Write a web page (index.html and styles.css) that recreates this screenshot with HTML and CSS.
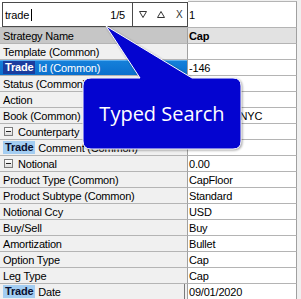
FILE: index.html
```html
<!DOCTYPE html>
<html>
<head>
<meta charset="utf-8">
<link rel="stylesheet" href="styles.css">
</head>
<body>
<div class="grid">
  <div class="row search-row">
    <div class="search-cell">
      <div class="searchbox">
        <div class="sinput"><span class="stext">trade</span><span class="caret"></span><span class="count">1/5</span></div>
        <div class="sbtns">
          <svg class="tri" width="8" height="7" viewBox="0 0 8 7"><path d="M0.5 0.5 H7.5 L4 6.5 Z" fill="none" stroke="#333" stroke-width="1"/></svg>
          <svg class="tri" width="8" height="7" viewBox="0 0 8 7"><path d="M0.5 6.5 H7.5 L4 0.5 Z" fill="none" stroke="#333" stroke-width="1"/></svg>
          <span class="xbtn">X</span>
        </div>
      </div>
    </div>
    <div class="rcell search-val">1</div>
  </div>
  <div class="row strat-row"><div class="lcell">Strategy Name</div><div class="rcell bold">Cap</div></div>
  <div class="row"><div class="lcell">Template (Common)</div><div class="rcell"></div></div>
  <div class="row sel-row"><div class="lcell"><span class="hl-dark">Trade</span>&nbsp;Id (Common)</div><div class="rcell">-146</div></div>
  <div class="row"><div class="lcell">Status (Common)</div><div class="rcell"></div></div>
  <div class="row"><div class="lcell">Action</div><div class="rcell"></div></div>
  <div class="row"><div class="lcell">Book (Common)</div><div class="rcell">FX_NEW_NYC</div></div>
  <div class="row"><div class="lcell"><span class="toggle"></span>Counterparty</div><div class="rcell"></div></div>
  <div class="row"><div class="lcell"><span class="hl-light">Trade</span>&nbsp;Comment (Common)</div><div class="rcell"></div></div>
  <div class="row"><div class="lcell"><span class="toggle"></span>Notional</div><div class="rcell">0.00</div></div>
  <div class="row"><div class="lcell">Product Type (Common)</div><div class="rcell">CapFloor</div></div>
  <div class="row"><div class="lcell">Product Subtype (Common)</div><div class="rcell">Standard</div></div>
  <div class="row"><div class="lcell">Notional Ccy</div><div class="rcell">USD</div></div>
  <div class="row"><div class="lcell">Buy/Sell</div><div class="rcell">Buy</div></div>
  <div class="row"><div class="lcell">Amortization</div><div class="rcell">Bullet</div></div>
  <div class="row"><div class="lcell">Option Type</div><div class="rcell">Cap</div></div>
  <div class="row"><div class="lcell">Leg Type</div><div class="rcell">Cap</div></div>
  <div class="row cur-row"><div class="lcell"><span class="hl-light">Trade</span>&nbsp;Date</div><div class="rcell">09/01/2020</div></div>
</div>

<div class="callout">
  <svg class="bubble" width="160" height="126" viewBox="0 0 160 126">
    <path d="M24 1 L110 53 L151 53 Q159 53 159 61 L159 116 Q159 124 151 124 L9 124 Q1 124 1 116 L1 61 Q1 53 9 53 L58 53 Z" fill="#0404d0" stroke="#ffffff" stroke-width="1"/>
  </svg>
  <div class="label">Typed Search</div>
</div>
</body>
</html>
```

FILE: styles.css
```css
* { box-sizing: border-box; }

body {
  margin: 0;
  width: 301px;
  height: 299px;
  overflow: hidden;
  position: relative;
  background: #f0f0f0;
  color: #000;
  font-family: "Liberation Sans", Arial, sans-serif;
  font-size: 11px;
  letter-spacing: -0.2px;
}

.grid {
  display: flex;
  flex-direction: column;
}

.row {
  display: flex;
  height: 16px;
}

.lcell {
  width: 188px;
  padding-left: 3px;
  background: #f0f0f0;
  border-right: 1px solid #a0a0a0;
  border-bottom: 1px solid #b4b4b4;
  display: flex;
  align-items: center;
  white-space: nowrap;
  overflow: hidden;
}

.rcell {
  width: 109px;
  padding-left: 1px;
  background: #fff;
  border-right: 1px solid #a0a0a0;
  border-bottom: 1px solid #b4b4b4;
  display: flex;
  align-items: center;
  white-space: nowrap;
  overflow: hidden;
}

.bold { font-weight: bold; }

/* search row */
.search-row { height: 28px; }

.search-cell {
  width: 188px;
  background: #fff;
  padding: 2px 0 0 2px;
  border-bottom: 1px solid #b4b4b4;
}

.searchbox {
  width: 186px;
  height: 25px;
  border: 1px solid #4a4a4a;
  background: #fff;
  display: flex;
}

.sinput {
  width: 130px;
  border-right: 1px solid #4a4a4a;
  display: flex;
  align-items: center;
  padding: 0 7px 0 2px;
}

.stext { font-size: 11px; }

.caret {
  width: 1px;
  height: 12px;
  background: #000;
  margin-left: 2px;
}

.count { margin-left: auto; }

.sbtns {
  flex: 1;
  display: flex;
  align-items: center;
  padding-left: 6px;
  gap: 10px;
}

.tri { display: block; }

.xbtn {
  font-size: 10px;
  color: #333;
  margin-left: 1px;
}

.search-val {
  margin-top: 1px;
  border-top: 1px solid #b4b4b4;
  height: 27px;
}

/* strategy row */
.strat-row .lcell { background: #c6c6c6; }
.strat-row .rcell { background: #e2e2e2; }

/* selected row */
.sel-row .lcell {
  background: linear-gradient(#5cb0f0 0, #5cb0f0 1px, #1580da 1px, #0a6fcd 100%);
  color: #fff;
}

.hl-dark {
  display: inline-block;
  height: 13px;
  line-height: 13px;
  padding: 0 2px;
  margin-left: 0;
  background: #1a3c9e;
  color: #fff;
  font-weight: bold;
}

.hl-light {
  display: inline-block;
  height: 13px;
  line-height: 13px;
  padding: 0 2px;
  background: #a3cdf2;
  color: #0a1030;
  font-weight: bold;
}

.sel-row .lcell, .cur-row .lcell { padding-left: 3px; }

.cur-row .lcell { box-shadow: inset -2px 0 0 #f0f0f0, inset -3px 0 0 #7a7a7a; }

.toggle {
  width: 9px;
  height: 9px;
  border: 1px solid #7c7c7c;
  background: linear-gradient(#ffffff, #dcdcdc);
  position: relative;
  margin: 0 5px 0 1px;
  flex: none;
}

.toggle::after {
  content: "";
  position: absolute;
  left: 1px;
  top: 3px;
  width: 5px;
  height: 1px;
  background: #222;
}

/* callout overlay */
.callout {
  position: absolute;
  left: 82px;
  top: 25px;
  width: 160px;
  height: 126px;
}

.bubble {
  display: block;
  filter: drop-shadow(1px 1px 1px rgba(0, 0, 0, 0.35));
}

.label {
  position: absolute;
  left: 1px;
  top: 53px;
  width: 158px;
  height: 71px;
  line-height: 71px;
  text-align: center;
  color: #fff;
  font-family: "Open Sans", "Noto Sans", sans-serif;
  font-size: 20px;
  letter-spacing: 0;
}
```
